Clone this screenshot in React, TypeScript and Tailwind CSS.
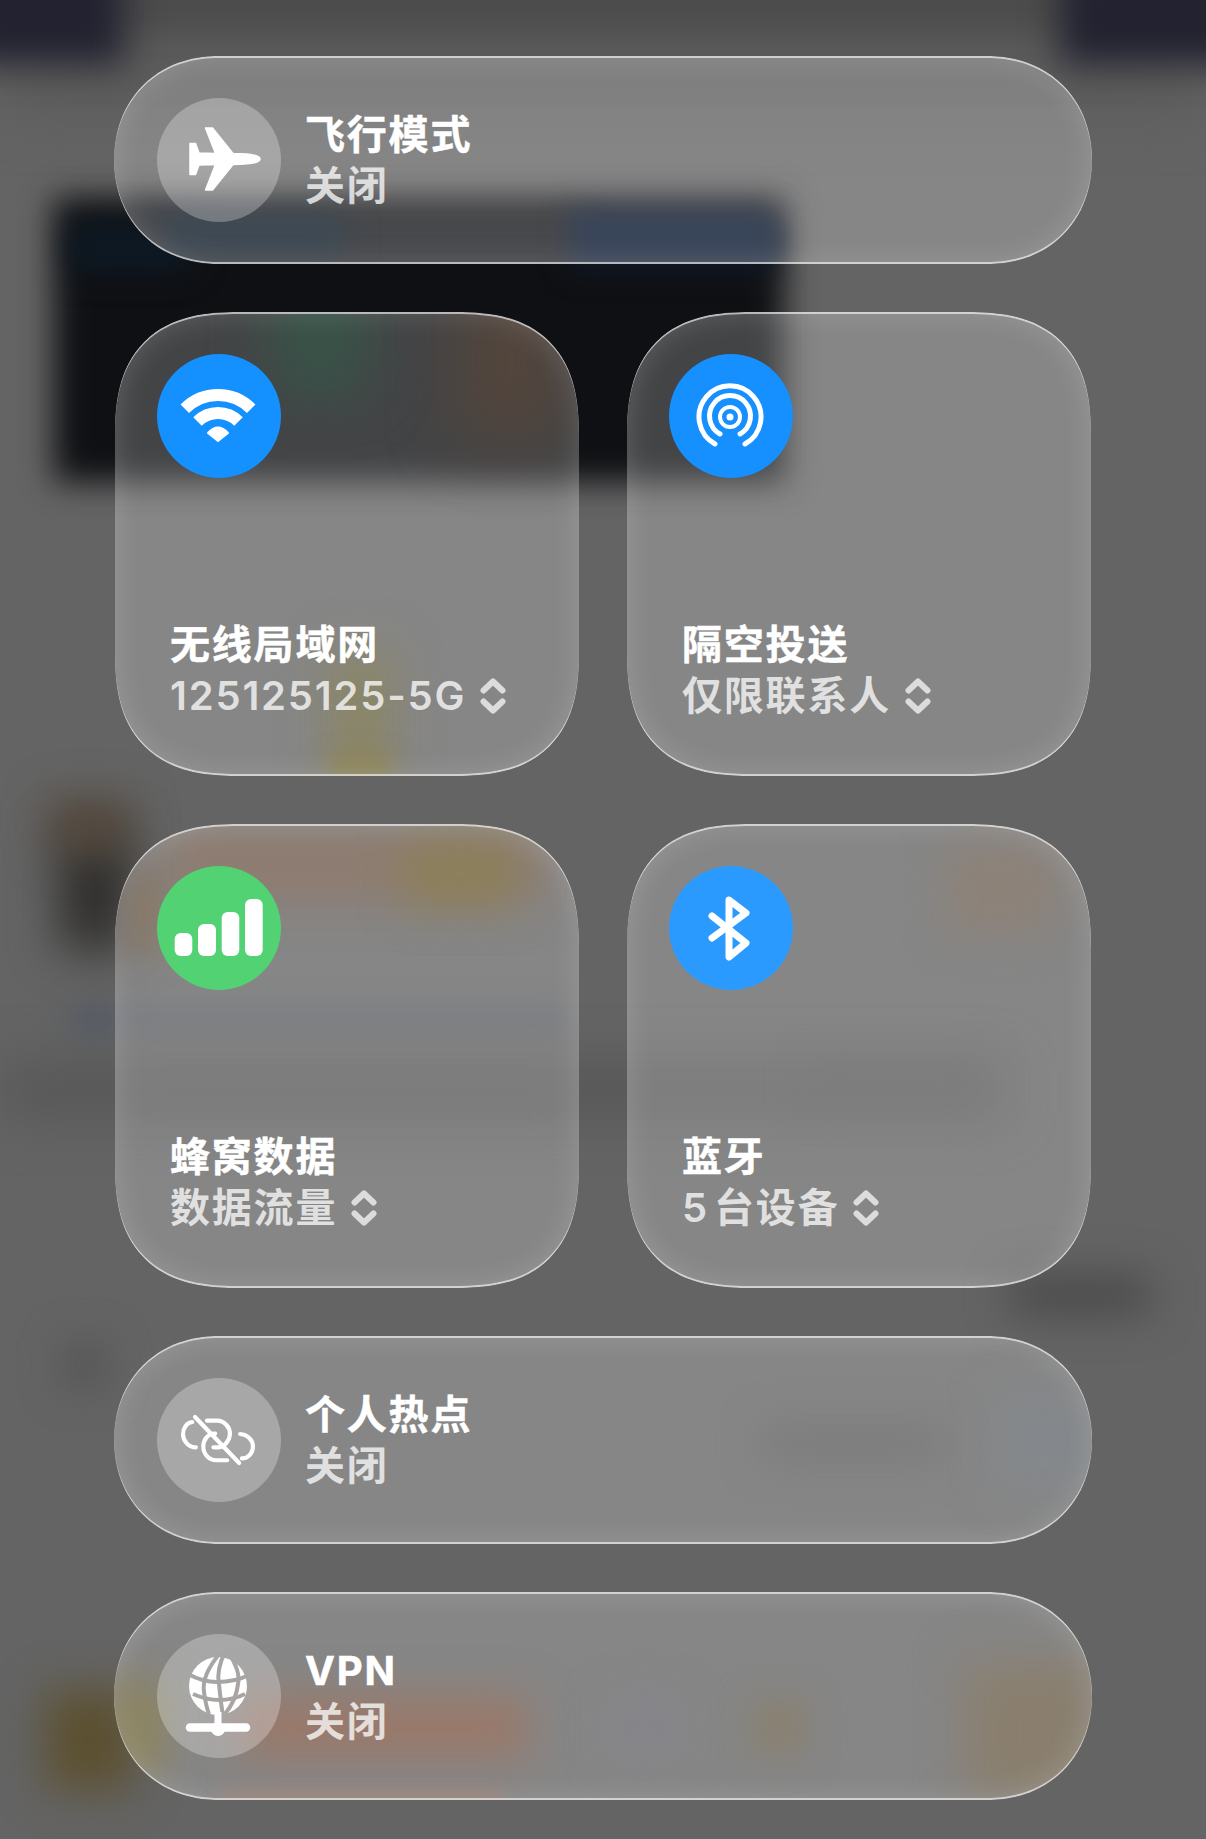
import React from "react";

const font = "font-['Inter','Noto_Sans_CJK_SC',sans-serif]";

function Blob({ className }: { className: string }) {
  return <div className={`absolute ${className}`} />;
}

function Chevrons() {
  return (
    <svg viewBox="0 0 26 38" className="w-[26px] h-[38px] shrink-0" fill="none" stroke="#dcdcdc" strokeWidth="6" strokeLinecap="round" strokeLinejoin="round">
      <path d="M3.5 13.5 13 4.500l9.500 9" />
      <path d="M3.500 24.500 13 33.500l9.500-9" />
    </svg>
  );
}

function Circle({ className, children }: { className: string; children: React.ReactNode }) {
  return (
    <div className={`relative w-[124px] h-[124px] rounded-full shrink-0 ${className}`}>
      <svg viewBox="0 0 124 124" className="w-full h-full">{children}</svg>
    </div>
  );
}

function Rim() {
  return <div className="absolute inset-0 rounded-[inherit] [corner-shape:inherit] pointer-events-none shadow-[inset_0_2px_0_rgba(255,255,255,0.6),inset_0_-2px_0_rgba(255,255,255,0.6),inset_0_0_30px_rgba(255,255,255,0.17)]" />;
}

const titleCls = "text-[40px] leading-[51px] font-bold text-white tracking-[1.8px] [-webkit-text-stroke:0.5px_#fff]";
const subCls = "text-[40px] leading-[51px] font-semibold text-white/75 tracking-[1.8px]";

function Pill({ icon, title, sub, blobs }: { icon: React.ReactNode; title: string; sub: string; blobs?: React.ReactNode }) {
  return (
    <div className="relative h-[208px] rounded-[104px] [corner-shape:superellipse(1.08)] bg-white/[0.22] overflow-hidden flex items-center pl-[43px] gap-[24px]">
      {blobs}
      <div className="relative">{icon}</div>
      <div className="relative flex flex-col">
        <div className={titleCls}>{title}</div>
        <div className={subCls}>{sub}</div>
      </div>
      <Rim />
    </div>
  );
}

function Tile({ icon, title, sub, blobs }: { icon: React.ReactNode; title: string; sub: string; blobs?: React.ReactNode }) {
  return (
    <div className="relative h-[464px] rounded-[124px] [corner-shape:superellipse(1.35)] bg-white/[0.22] overflow-hidden flex flex-col justify-between pt-[42px] pl-[42px] pb-[55px]">
      {blobs}
      <div className="relative">{icon}</div>
      <div className="relative flex flex-col pl-[13px]">
        <div className={titleCls}>{title}</div>
        <div className={`flex items-center gap-[14px] ${subCls}`}>
          <span>{sub}</span>
          <Chevrons />
        </div>
      </div>
      <Rim />
    </div>
  );
}

const grey = "bg-white/[0.27]";

export default function App() {
  return (
    <div className={`relative w-[1206px] h-[1839px] overflow-hidden bg-[#646464] ${font}`}>
      {/* blurred page behind the panel */}
      <Blob className="left-[100px] -top-[50px] w-[1000px] h-[100px] bg-[#4c4c4c] blur-[20px]" />
      <Blob className="left-0 top-[50px] w-[1206px] h-[60px] bg-[#5a5a5a] blur-[28px]" />
      <Blob className="-left-[40px] -top-[40px] w-[165px] h-[105px] bg-[#222230] blur-[18px]" />
      <Blob className="left-[1060px] -top-[40px] w-[200px] h-[105px] bg-[#222230] blur-[18px]" />
      <Blob className="left-[54px] top-[198px] w-[730px] h-[284px] bg-[#0f1013] blur-[16px]" />
      <Blob className="left-[570px] top-[225px] w-[205px] h-[45px] bg-[#101a2a] blur-[14px]" />
      <Blob className="left-[70px] top-[225px] w-[120px] h-[45px] bg-[#0d1a26] blur-[16px]" />
      <Blob className="left-[60px] top-[830px] w-[70px] h-[120px] bg-[#2e2d2b] blur-[24px]" />
      <Blob className="left-[50px] top-[800px] w-[80px] h-[50px] bg-[#54473a] blur-[22px]" />
      <Blob className="left-[70px] top-[1005px] w-[50px] h-[30px] bg-[#555b66] blur-[14px]" />
      <Blob className="left-0 top-[1065px] w-[1000px] h-[50px] bg-[#565656] blur-[26px]" />
      <Blob className="left-[1010px] top-[1275px] w-[140px] h-[40px] bg-[#4a4a4a] blur-[20px]" />
      <Blob className="left-[60px] top-[1340px] w-[50px] h-[50px] bg-[#585858] blur-[18px]" />
      <Blob className="left-[45px] top-[1690px] w-[90px] h-[100px] bg-[#5c5030] blur-[22px]" />

      <div className="relative flex flex-col gap-[48px] pt-[56px] px-[114px]">
        <Pill
          title="飞行模式"
          sub="关闭"
          blobs={
            <>
              <Blob className="left-0 top-[158px] w-[470px] h-[60px] bg-[#48494c] blur-[14px]" />
              <Blob className="left-[50px] top-[160px] w-[180px] h-[40px] bg-[#3c4a56] blur-[16px]" />
              <Blob className="left-[456px] top-[155px] w-[208px] h-[55px] bg-[#39455a] blur-[14px]" />
            </>
          }
          icon={
            <Circle className={grey}>
              <path
                fill="#fff"
                stroke="#fff"
                strokeWidth="1.500"
                strokeLinejoin="round"
                d="M48.500 30 55.500 30 76 55.500C90 55.500 103 56.500 103 61 103 65.500 90 66.500 76 66.500L55.500 92 48.500 92 58.500 66.500 42 67 38.500 76.500 33 76.500 33 45.500 38.500 45.500 42 55 58.500 55.500Z"
              />
            </Circle>
          }
        />
        <div className="mx-[1px] grid grid-cols-2 gap-x-[48px] gap-y-[48px]">
          <Tile
            title="无线局域网"
            sub="125125125-5G"
            blobs={
              <>
                <Blob className="left-[160px] -top-[30px] w-[90px] h-[110px] bg-[#375548] blur-[30px]" />
                <Blob className="left-[340px] -top-[30px] w-[110px] h-[160px] bg-[#52453c] blur-[30px]" />
                <Blob className="left-[215px] top-[340px] w-[60px] h-[130px] bg-[#8b8664] blur-[24px]" />
                <Blob className="left-[215px] top-[445px] w-[60px] h-[20px] bg-[#8f8450] blur-[12px]" />
              </>
            }
            icon={
              <Circle className="bg-[#1590ff]">
                <g fill="none" stroke="#fff" strokeWidth="12">
                  <path d="M27.800 54.800A47 47 0 0 1 94.200 54.800" />
                  <path d="M40.500 67.500A29 29 0 0 1 81.500 67.500" />
                </g>
                <path fill="#fff" stroke="#fff" strokeWidth="2" strokeLinejoin="round" d="M51 79Q61 68 71 79L61 87Z" />
              </Circle>
            }
          />
          <Tile
            title="隔空投送"
            sub="仅限联系人"
            icon={
              <Circle className="bg-[#168fff]">
                <g fill="none" stroke="#fff" strokeWidth="5" strokeLinecap="round">
                  <path d="M46 90A31 31 0 1 1 76 90" />
                  <path d="M51 80A20.500 20.500 0 1 1 71 80" />
                </g>
                <circle cx="61" cy="63" r="10" fill="none" stroke="#fff" strokeWidth="4" />
                <circle cx="61" cy="63" r="3.500" fill="#fff" />
              </Circle>
            }
          />
          <Tile
            title="蜂窝数据"
            sub="数据流量"
            blobs={
              <>
                <Blob className="left-[50px] top-[5px] w-[380px] h-[70px] bg-[#8f7b6e] blur-[24px]" />
                <Blob className="left-[290px] top-[20px] w-[110px] h-[60px] bg-[#8c8058] blur-[22px]" />
                <Blob className="left-[15px] top-[50px] w-[30px] h-[80px] bg-[#8d7a66] blur-[16px]" />
                <Blob className="left-0 top-[186px] w-[450px] h-[18px] bg-[#767b83] blur-[14px]" />
                <Blob className="left-0 top-[245px] w-[464px] h-[40px] bg-[#7c7c7c] blur-[22px]" />
              </>
            }
            icon={
              <Circle className="bg-[#52d273]">
                <g fill="#fff">
                  <rect x="17.700" y="67" width="17.600" height="23" rx="6" />
                  <rect x="41" y="58" width="18" height="32" rx="6" />
                  <rect x="64.700" y="46" width="17.600" height="44" rx="6" />
                  <rect x="88" y="33" width="17.700" height="57" rx="6" />
                </g>
              </Circle>
            }
          />
          <Tile
            title="蓝牙"
            sub={"5\u200a台设备"}
            blobs={
              <>
                <Blob className="left-[320px] top-[20px] w-[110px] h-[90px] bg-[#8d8278] blur-[20px]" />
                <Blob className="left-[180px] top-[240px] w-[180px] h-[40px] bg-[#7d7d7d] blur-[18px]" />
              </>
            }
            icon={
              <Circle className="bg-[#2b9aff]">
                <path fill="none" stroke="#fff" strokeWidth="7" strokeLinecap="round" strokeLinejoin="round" d="M43 50 77 77 60 91V34L77 47 43 72" />
              </Circle>
            }
          />
        </div>
        <Pill
          title="个人热点"
          sub="关闭"
          blobs={
            <>
              <Blob className="left-[650px] top-[90px] w-[180px] h-[35px] bg-[#7b7b7b] blur-[20px]" />
              <Blob className="left-[880px] top-[60px] w-[100px] h-[90px] bg-[#84888c] blur-[22px]" />
            </>
          }
          icon={
            <Circle className={grey}>
              <g fill="none" stroke="#fff" strokeWidth="4.500" strokeLinecap="round" transform="translate(61 62) scale(.92) translate(-61 -62)">
                <path d="M33 42.500C27 43 23 49 23 56 23 63 29 70 37 70" />
                <path d="M49 41H60C68 41 74 48 74 55 74 62 68 70 61 70H56" />
                <path d="M58 55H57C50 55 45 62 45 69 45 77 51 84 59 84H71" />
                <path d="M85 55.500C93 56 99 62 99 69 99 76 94 82 87 82" />
                <path d="M36 37 84 87" />
              </g>
            </Circle>
          }
        />
        <Pill
          title="VPN"
          sub="关闭"
          blobs={
            <>
              <Blob className="left-[125px] top-[105px] w-[290px] h-[60px] bg-[#9a7868] blur-[22px]" />
              <Blob className="left-[110px] top-[200px] w-[280px] h-[10px] bg-[#a08070] blur-[8px]" />
              <Blob className="left-[495px] top-[110px] w-[70px] h-[50px] bg-[#86848c] blur-[22px]" />
              <Blob className="left-[640px] top-[110px] w-[50px] h-[50px] bg-[#8a7f6c] blur-[18px]" />
              <Blob className="left-[850px] top-[70px] w-[140px] h-[140px] bg-[#8a7f6e] blur-[24px]" />
              <Blob className="left-0 top-[90px] w-[50px] h-[90px] bg-[#8e8660] blur-[20px]" />
            </>
          }
          icon={
            <Circle className={grey}>
              <mask id="globe">
                <circle cx="61" cy="52" r="29" fill="#fff" />
                <g fill="none" stroke="#000" strokeWidth="4">
                  <path d="M64 18C52 32 45 46 47 58 48 66 49 72 52 80" />
                  <path d="M68 18C62 30 60 40 62 50 63 60 64 70 66 82" />
                  <path d="M73 20C79 32 83 40 81 50 80 60 76 70 68 80" />
                  <path d="M31 40C42 46 50 48 60 48 72 48 82 46 92 41" />
                  <path d="M36 60C45 64 52 66 62 66 72 66 80 64 88 60" />
                </g>
              </mask>
              <rect x="30" y="20" width="62" height="64" fill="#fff" mask="url(#globe)" />
              <path d="M61 78V94" stroke="#fff" strokeWidth="7" />
              <path d="M33 93.500H89" stroke="#fff" strokeWidth="8.500" strokeLinecap="round" />
              <circle cx="61" cy="95" r="7" fill="#fff" />
            </Circle>
          }
        />
      </div>
    </div>
  );
}
